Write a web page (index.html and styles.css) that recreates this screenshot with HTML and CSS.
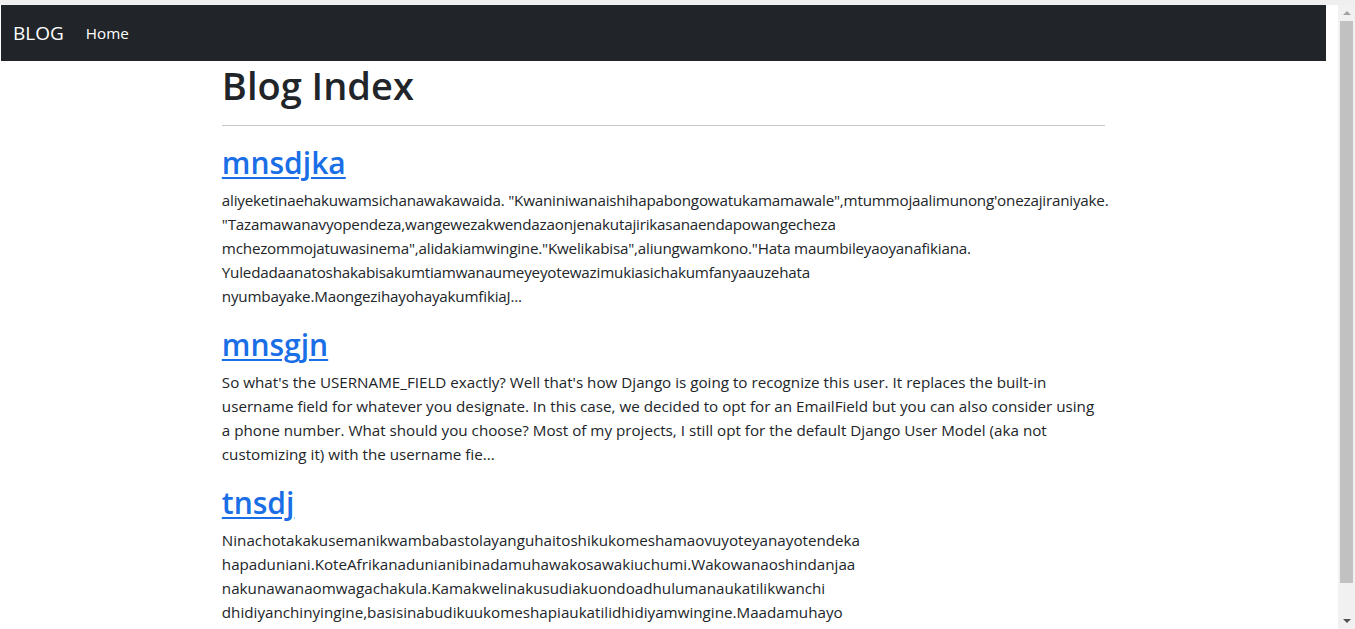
FILE: index.html
```html
<!DOCTYPE html>
<html lang="en">
<head>
<meta charset="utf-8">
<title>Blog Index</title>
<link rel="stylesheet" href="styles.css">
</head>
<body>
<nav class="navbar">
  <a class="brand" href="#">BLOG</a>
  <a class="nav-link" href="#">Home</a>
</nav>
<div class="row">
  <main class="col">
    <h1 class="page-title">Blog Index</h1>
    <hr class="rule">
    <article class="post">
      <h2 class="post-title"><a href="#">mnsdjka</a></h2>
      <p class="post-text post-text-dense">aliyeketinaehakuwamsichanawakawaida. "Kwaniniwanaishihapabongowatukamamawale",mtummojaalimunong'onezajiraniyake.<br>"Tazamawanavyopendeza,wangewezakwendazaonjenakutajirikasanaendapowangecheza<br>mchezommojatuwasinema",alidakiamwingine."Kwelikabisa",aliungwamkono."Hata maumbileyaoyanafikiana.<br>Yuledadaanatoshakabisakumtiamwanaumeyeyotewazimukiasichakumfanyaauzehata<br>nyumbayake.MaongezihayohayakumfikiaJ...</p>
    </article>
    <article class="post">
      <h2 class="post-title"><a href="#">mnsgjn</a></h2>
      <p class="post-text">So what's the USERNAME_FIELD exactly? Well that's how Django is going to recognize this user. It replaces the built-in<br>username field for whatever you designate. In this case, we decided to opt for an EmailField but you can also consider using<br>a phone number. What should you choose? Most of my projects, I still opt for the default Django User Model (aka not<br>customizing it) with the username fie...</p>
    </article>
    <article class="post">
      <h2 class="post-title"><a href="#">tnsdj</a></h2>
      <p class="post-text">Ninachotakakusemanikwambabastolayanguhaitoshikukomeshamaovuyoteyanayotendeka<br>hapaduniani.KoteAfrikanadunianibinadamuhawakosawakiuchumi.Wakowanaoshindanjaa<br>nakunawanaomwagachakula.Kamakwelinakusudiakuondoadhulumanaukatilikwanchi<br>dhidiyanchinyingine,basisinabudikuukomeshapiaukatilidhidiyamwingine.Maadamuhayo</p>
    </article>
  </main>
</div>
<div class="scrollbar" aria-hidden="true">
  <span class="arrow arrow-up"></span>
  <span class="thumb"></span>
  <span class="arrow arrow-down"></span>
</div>
</body>
</html>
```
FILE: styles.css
```css
html, body {
  height: 100%;
}
body {
  margin: 0;
  padding: 0 29px 0 1px;
  border-top: 5px solid #efefef;
  background: #fff;
  color: #212529;
  font-family: "Open Sans", "Noto Sans", sans-serif;
  font-size: 15.2px;
  line-height: 24px;
  overflow: hidden;
  box-sizing: border-box;
}
.navbar {
  display: flex;
  align-items: center;
  height: 56px;
  padding: 0 12px;
  background: #212529;
}
.brand {
  color: #fff;
  text-decoration: none;
  font-size: 19px;
  line-height: 30px;
  margin-right: 14px;
}
.nav-link {
  color: #fff;
  text-decoration: none;
  padding: 8px;
  font-size: 15.2px;
}
.row {
  display: flex;
}
.col {
  margin-left: 16.6667%;
  width: 66.6667%;
}
.page-title {
  margin: 0;
  font-size: 38px;
  font-weight: 600;
  line-height: 48px;
}
.rule {
  margin: 16px 0;
  border: 0;
  border-top: 1px solid #c8c9ca;
}
.post-title {
  margin: 0 0 6px;
  padding-top: 2px;
  font-size: 30px;
  font-weight: 600;
  line-height: 38px;
}
.post-title a {
  color: #1a6ee6;
  text-decoration: underline;
  text-decoration-thickness: 2px;
  text-underline-offset: 3px;
}
.post-text {
  margin: 0 0 16px;
  white-space: nowrap;
}
.post-text-dense {
  letter-spacing: -0.2px;
}
.scrollbar {
  position: fixed;
  top: 5px;
  right: 0;
  bottom: 0;
  width: 17px;
  background: #f1f1f1;
}
.thumb {
  position: absolute;
  top: 16px;
  left: 2px;
  width: 13px;
  height: 562px;
  background: #c1c1c1;
}
.arrow {
  position: absolute;
  left: 5px;
  width: 0;
  height: 0;
  border-left: 4px solid transparent;
  border-right: 4px solid transparent;
}
.arrow-up {
  top: 6px;
  border-bottom: 4px solid #a3a3a3;
}
.arrow-down {
  bottom: 6px;
  border-top: 4px solid #505050;
}
```
